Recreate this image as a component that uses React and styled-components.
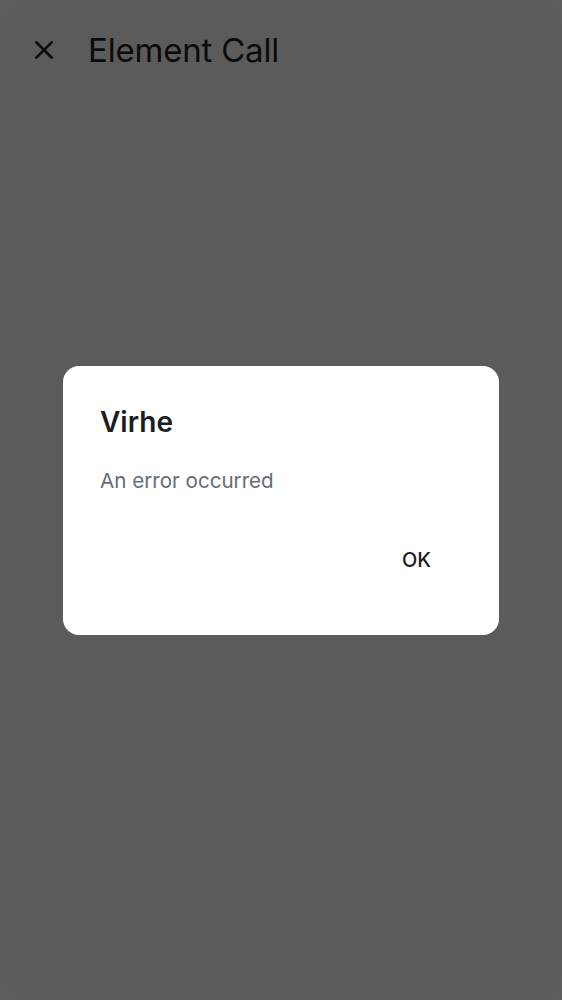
import React from "react";
import styled, { createGlobalStyle } from "styled-components";

const GlobalStyle = createGlobalStyle`
  html, body {
    margin: 0;
    padding: 0;
    background: #5b5b5b;
    font-family: Inter, "Noto Sans", sans-serif;
  }
  * {
    box-sizing: border-box;
  }
`;

const Page = styled.div`
  min-height: 100vh;
  background: #5b5b5b;
  box-shadow: inset 0 0 28px rgba(255, 255, 255, 0.03);
`;

const Header = styled.header`
  display: flex;
  align-items: center;
  gap: 30px;
  height: 100px;
  padding: 0 0 0 30px;
`;

const CloseButton = styled.button`
  display: flex;
  align-items: center;
  justify-content: center;
  width: 28px;
  height: 28px;
  padding: 0;
  border: none;
  background: transparent;
  color: #0b0b0c;
  cursor: pointer;
`;

const HeaderTitle = styled.h1`
  margin: 0;
  font-family: Inter, sans-serif;
  font-size: 33px;
  font-weight: 400;
  color: #0b0b0c;
  letter-spacing: -0.2px;
`;

const Overlay = styled.div`
  position: fixed;
  inset: 0;
  display: flex;
  align-items: center;
  justify-content: center;
`;

const Dialog = styled.div`
  width: 436px;
  height: 269px;
  background: #ffffff;
  border-radius: 16px;
  padding: 36px 37px 0 37px;
  display: flex;
  flex-direction: column;
`;

const DialogTitle = styled.h2`
  margin: 0;
  font-size: 28px;
  font-weight: 600;
  color: #1b1d22;
  line-height: 40px;
`;

const DialogText = styled.p`
  margin: 26px 0 0;
  font-size: 20.6px;
  font-weight: 400;
  color: #656d77;
  line-height: 26px;
`;

const Actions = styled.div`
  display: flex;
  justify-content: flex-end;
  margin-top: 46px;
  padding-right: 7px;
`;

const TextButton = styled.button`
  border: none;
  background: transparent;
  padding: 8px 24px;
  font-family: Inter, sans-serif;
  font-size: 20px;
  font-weight: 500;
  color: #1b1d22;
  cursor: pointer;
`;

const CloseIcon = () => (
  <svg width="24" height="24" viewBox="0 0 24 24" fill="none">
    <path
      d="M4.5 4.5L19.5 19.5M19.5 4.5L4.5 19.5"
      stroke="currentColor"
      strokeWidth="2.6"
      strokeLinecap="square"
    />
  </svg>
);

export default function App() {
  return (
    <>
      <GlobalStyle />
      <Page>
        <Header>
          <CloseButton aria-label="Close">
            <CloseIcon />
          </CloseButton>
          <HeaderTitle>Element Call</HeaderTitle>
        </Header>
      </Page>
      <Overlay>
        <Dialog role="dialog">
          <DialogTitle>Virhe</DialogTitle>
          <DialogText>An error occurred</DialogText>
          <Actions>
            <TextButton>OK</TextButton>
          </Actions>
        </Dialog>
      </Overlay>
    </>
  );
}
